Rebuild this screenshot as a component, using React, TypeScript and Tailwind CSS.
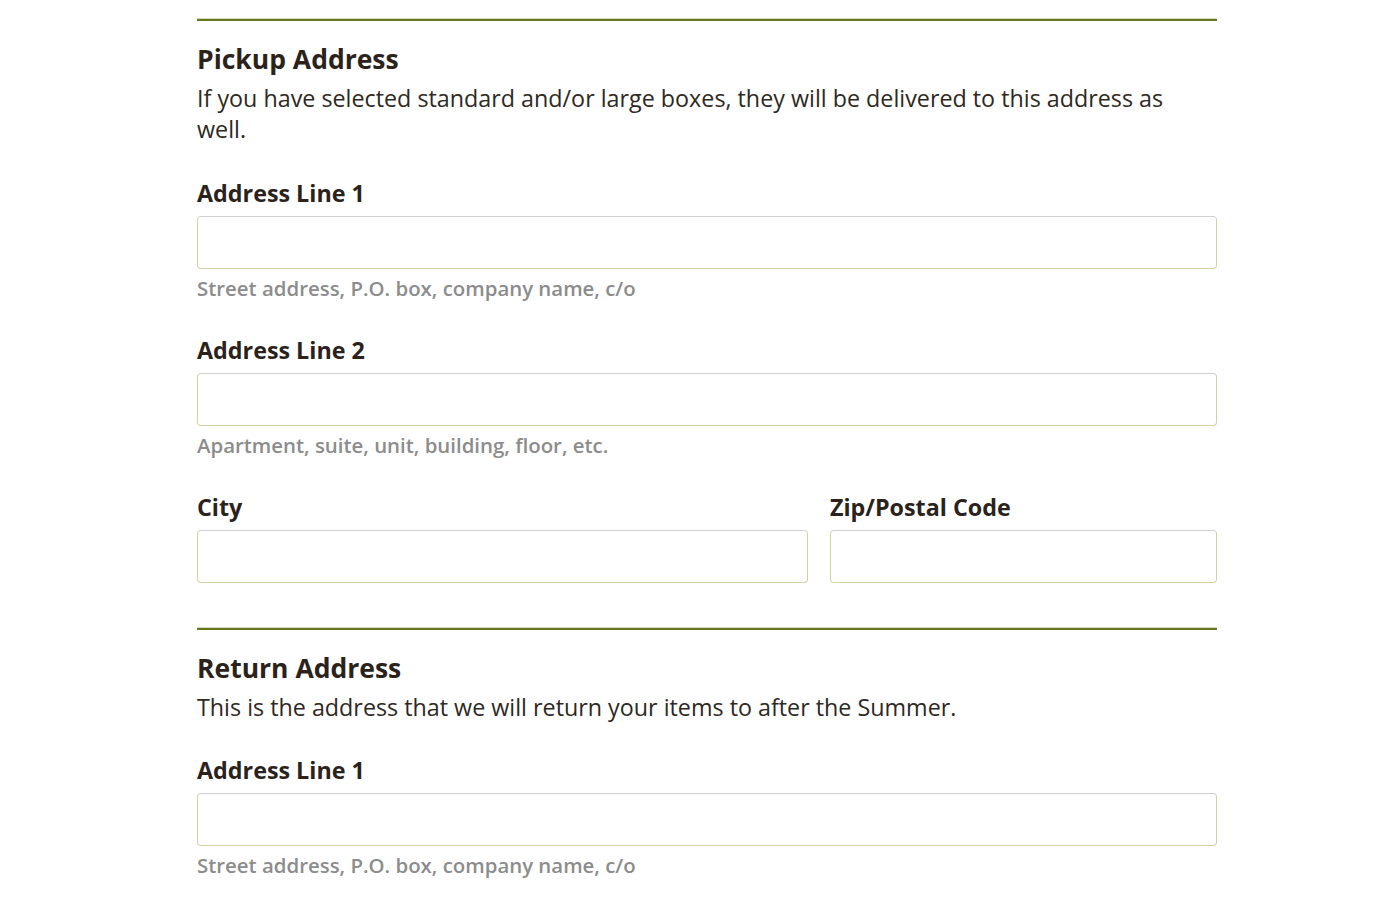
import React from 'react'

interface FieldProps {
  label: string
  help?: string
}

const Field = ({ label, help }: FieldProps) => {
  return (
    <div>
      <label className="block text-[23.3px] leading-[30px] font-bold text-[#2b231b]">{label}</label>
      <input
        type="text"
        className="mt-[8px] block h-[53px] w-full rounded-[4px] border-[1.5px] border-[#d3d2a6] border-t-[#cfcfcf] bg-white outline-none"
      />
      {help && (
        <p className="mt-[6px] text-[20.4px] leading-[26px] font-semibold text-[#8c8c8c]">{help}</p>
      )}
    </div>
  )
}

const SectionHead = ({ title, text }: { title: string; text: string }) => {
  return (
    <>
      <div className="h-[3px] border-t border-[#d6d6c4] bg-[#64781c]" />
      <h2 className="mt-[20px] text-[26.5px] leading-[36px] font-bold text-[#2b231b]">{title}</h2>
      <p className="mt-[6px] text-[23.3px] leading-[31px] text-[#2e2923]">{text}</p>
    </>
  )
}

const App = () => {
  return (
    <div className="min-h-screen bg-white" style={{ fontFamily: '"Open Sans", "Noto Sans", sans-serif' }}>
      <main className="w-[1020px] pt-[18px] ml-[197px]">
        <SectionHead
          title="Pickup Address"
          text="If you have selected standard and/or large boxes, they will be delivered to this address as well."
        />

        <div className="mt-[33px] flex flex-col gap-[34px]">
          <Field label="Address Line 1" help="Street address, P.O. box, company name, c/o" />
          <Field label="Address Line 2" help="Apartment, suite, unit, building, floor, etc." />
          <div className="grid grid-cols-[611px_1fr] gap-[22px]">
            <Field label="City" />
            <Field label="Zip/Postal Code" />
          </div>
        </div>

        <div className="mt-[44px]">
          <SectionHead
            title="Return Address"
            text="This is the address that we will return your items to after the Summer."
          />
        </div>

        <div className="mt-[32px]">
          <Field label="Address Line 1" help="Street address, P.O. box, company name, c/o" />
        </div>
      </main>
    </div>
  )
}

export default App
